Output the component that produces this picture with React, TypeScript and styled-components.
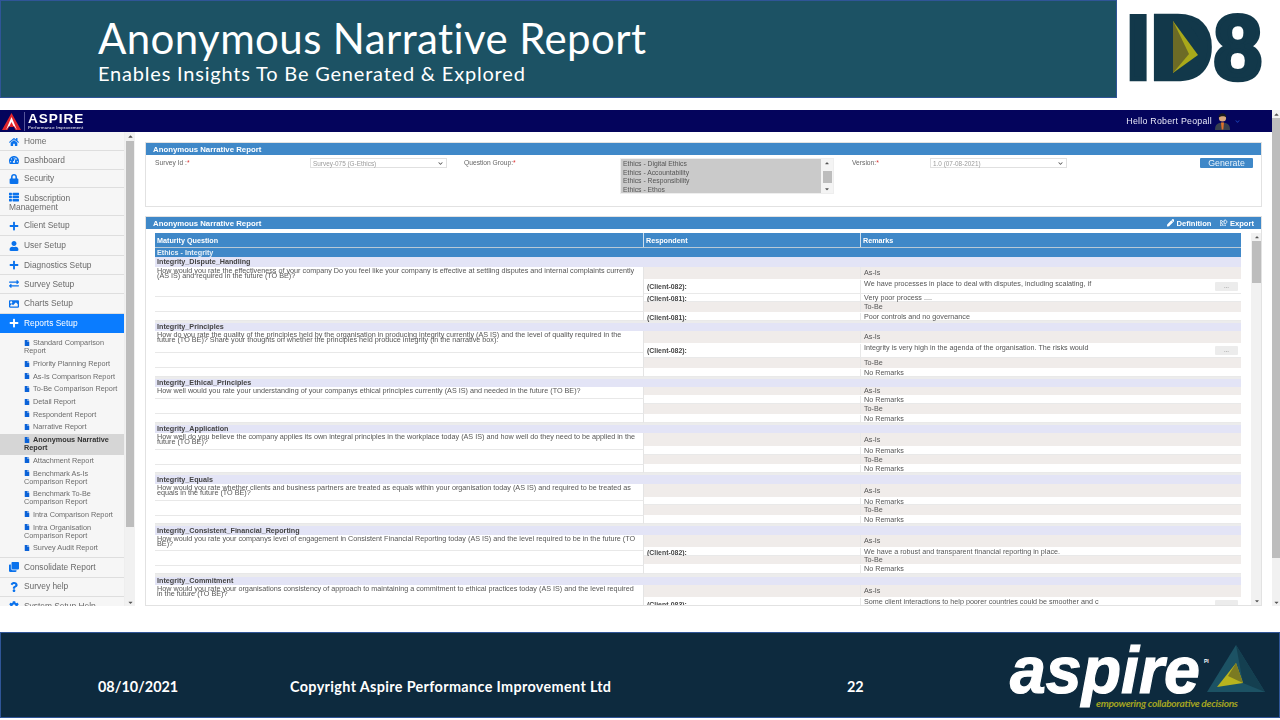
import React from "react";
import styled, { createGlobalStyle } from "styled-components";
import {
  FaHome, FaTachometerAlt, FaLock, FaThList, FaPlus, FaUser, FaExchangeAlt, FaImage,
  FaFile, FaQuestion, FaPen, FaRegShareSquare, FaClone, FaCog, FaChevronDown, FaCaretUp, FaCaretDown,
} from "react-icons/fa";

const Global = createGlobalStyle`
  html, body { margin: 0; padding: 0; background: #fff; overflow: hidden; }
  * { box-sizing: border-box; }
`;

const Slide = styled.div`
  width: 1280px; height: 720px; display: flex; flex-direction: column; background: #fff; overflow: hidden;
  font-family: "Liberation Sans", Arial, sans-serif;
`;
const TopRow = styled.header`display: flex; height: 98px; margin-bottom: 12px; flex: none;`;
const Banner = styled.div`
  width: 1117px; background: #1c5264; border: 1px solid #2f5597; padding: 14px 0 0 97px; color: #fff;
  font-family: Lato, "Open Sans", sans-serif; font-variant-ligatures: none;
`;
const Title = styled.h1`margin: 0; font-size: 42px; line-height: 46px; font-weight: 400; letter-spacing: .4px;`;
const Subtitle = styled.p`margin: 0; font-size: 20px; line-height: 24px; letter-spacing: .8px;`;
const LogoBox = styled.div`flex: 1; padding: 12px 0 0 12px;`;

const Frame = styled.main`display: flex; height: 496px; flex: none; filter: blur(.35px); overflow: hidden;`;
const AppCol = styled.div`flex: 1; min-width: 0; display: flex; flex-direction: column;`;
const NavBar = styled.div`
  height: 22px; flex: none; background: #04045c; display: flex; align-items: center; color: #fff;
`;
const NavBrand = styled.div`display: flex; align-items: center; padding-left: 2px; flex: 1;`;
const BrandDivider = styled.span`width: 1px; height: 19px; background: #55559a; margin: 0 3px;`;
const BrandText = styled.div`display: flex; flex-direction: column; line-height: 1;`;
const BrandName = styled.span`font-size: 13.6px; line-height: 12px; font-weight: 700; letter-spacing: .95px;`;
const BrandSub = styled.span`font-size: 4.2px; line-height: 5px; letter-spacing: .25px;`;
const Hello = styled.span`font-size: 8.8px; letter-spacing: .25px; margin-right: 3px; color: #e8e8f8;`;
const Chevron = styled.span`display: flex; margin: 0 32px 0 5px; color: #1b3fb0; font-size: 5px;`;

const Body = styled.div`flex: 1; min-height: 0; display: flex;`;
const Sidebar = styled.nav`
  width: 125px; flex: none; background: #f6f6f6; overflow: hidden; padding-top: 1px; border-right: 1px solid #eee;
`;
const MenuItem = styled.div<{ $h: number; $active?: boolean; $pad?: boolean }>`
  height: ${(p) => p.$h}px; flex: none; padding: ${(p) => (p.$pad ? "4px 30px 0 9px" : "0 0 0 9px")};
  font-size: 8.4px; line-height: 9px; display: ${(p) => (p.$pad ? "block" : "flex")}; align-items: center;
  color: ${(p) => (p.$active ? "#fff" : "#6a6a6a")};
  background: ${(p) => (p.$active ? "#0a7cff" : "transparent")};
  border-bottom: 1.5px solid ${(p) => (p.$active ? "#0a7cff" : "#dedede")};
  svg { color: ${(p) => (p.$active ? "#fff" : "#0a72ec")}; font-size: 10px; margin-right: 5px; flex: none; vertical-align: -1px; }
`;
const SubList = styled.div`padding: 4px 0 2px; border-bottom: 1.5px solid #dedede;`;
const SubItem = styled.div<{ $active?: boolean }>`
  padding: 2.35px 0 2.35px 24px; font-size: 7.3px; line-height: 8px;
  color: ${(p) => (p.$active ? "#333" : "#6c6c6c")};
  font-weight: ${(p) => (p.$active ? 700 : 400)};
  background: ${(p) => (p.$active ? "#d6d6d6" : "transparent")};
  svg { color: #0a62d8; font-size: 6px; margin-right: 3px; vertical-align: -.5px; }
`;
const Scroll = styled.div<{ $w: number }>`
  width: ${(p) => p.$w}px; flex: none; background: #f1f1f1; display: flex; flex-direction: column; align-items: center;
  color: #555; font-size: 7px;
`;
const Thumb = styled.div<{ $top: number; $h: number; $inset?: number }>`
  width: calc(100% - ${(p) => (p.$inset ?? 1) * 2}px); height: ${(p) => p.$h}px; margin-top: ${(p) => p.$top}px;
  background: #bdbdbd; flex: none;
`;
const Arrow = styled.span<{ $end?: boolean }>`display: flex; height: 8px; align-items: center; flex: none; margin-top: ${(p) => (p.$end ? "auto" : "0")}; svg { display: block; }`;

const Content = styled.div`flex: 1; min-width: 0; padding: 10px 10px 0; display: flex; flex-direction: column; gap: 9px; overflow: hidden;`;
const Panel = styled.section<{ $h?: number }>`
  border: 1px solid #e2e2e2; background: #fff; flex: ${(p) => (p.$h ? `0 0 ${p.$h}px` : "1 1 0")}; min-height: 0;
  display: flex; flex-direction: column; overflow: hidden;
`;
const PanelHead = styled.div`
  height: 12px; flex: none; background: #3f88c8; color: #fff; font-weight: 700; font-size: 7.8px; display: flex; align-items: center;
  padding: 0 0 0 7px; justify-content: space-between;
`;
const HeadActions = styled.div`display: flex; gap: 9px; padding-right: 7px; font-size: 7.6px; svg { font-size: 7.5px; margin-right: 2px; vertical-align: -1px; }`;
const Form = styled.div`
  display: grid; grid-template-columns: 155px 154px 156px 232px 78px 270px 53px; padding: 3px 0 0 9px;
`;
const Label = styled.label`font-size: 6.7px; line-height: 10px; color: #666; span { color: #d33; }`;
const Select = styled.div`
  width: 137px; height: 10px; border: 1px solid #e0e0e0; font-size: 6.4px; color: #9a9a9a; display: flex; align-items: center;
  justify-content: space-between; padding: 0 3px 0 2px; svg { font-size: 5px; color: #555; }
`;
const ListBox = styled.div`width: 214px; height: 36px; border: 1px solid #eee; display: flex;`;
const ListOptions = styled.div`flex: 1; background: #cacaca; font-size: 6.8px; line-height: 8.5px; color: #555; padding: 1px 0 0 2px;`;
const ListScroll = styled.div`width: 12px; background: #f4f4f4; display: flex; flex-direction: column; align-items: center; color: #555; font-size: 6px;`;
const Button = styled.button`
  width: 53px; height: 10px; padding: 0; border: 0; border-radius: 1px; background: #3f88c8; color: #eaf3fb; font: 8.8px "Liberation Sans", Arial, sans-serif; line-height: 10px;
`;

const TableWrap = styled.div`flex: 1; min-height: 0; display: flex; padding: 4px 0 0 9px; gap: 10px; overflow: hidden;`;
const TableCol = styled.div`width: 1086px; flex: none;`;
const HeadRow = styled.div`
  display: grid; grid-template-columns: 489px 217px 380px; height: 15px; background: #3f88c8; border-bottom: 1px solid #b9c9d6;
`;
const HeadCell = styled.div`
  font-size: 7.2px; font-weight: 700; color: #fff; display: flex; align-items: center; padding-left: 2px; border-right: 1px solid #cfe0ee;
  &:last-child { border-right: 0; }
`;
const Section = styled.div`
  height: 9px; background: #3f88c8; color: #e8f1f9; font-size: 7.2px; font-weight: 700; display: flex; align-items: center; padding-left: 2px;
`;
const GroupTitle = styled.div<{ $h: number }>`
  height: ${(p) => p.$h}px; background: #e3e4f6; color: #444; font-size: 7.2px; font-weight: 700; display: flex; align-items: center; padding: 0 0 1px 2px;
`;
const GroupBody = styled.div<{ $gap: number }>`
  display: grid; grid-template-columns: 489px 597px; padding-bottom: ${(p) => p.$gap}px; background: #ececec;
`;
const LeftCol = styled.div`display: flex; flex-direction: column; background: #fff;`;
const LeftCell = styled.div<{ $h: number }>`
  height: ${(p) => p.$h}px; flex: none; border-bottom: 1px solid #e8e8e8; border-right: 1px solid #e4e4e4;
  padding: 2px 3px 0 2px; font-size: 7.22px; line-height: 4.8px; color: #555;
`;
const RightCol = styled.div`display: flex; flex-direction: column;`;
const Row = styled.div<{ $h: number; $grey?: boolean }>`
  height: ${(p) => p.$h}px; flex: none; display: grid; grid-template-columns: 217px 380px;
  background: ${(p) => (p.$grey ? "#f0ecea" : "#fff")};
  border-bottom: 1px solid ${(p) => (p.$grey ? "#fff" : "#e9e9e9")};
`;
const Respondent = styled.div`
  font-size: 6.9px; font-weight: 700; color: #444; display: flex; align-items: center; padding-left: 3px; border-right: 1px solid #e8e8e8;
`;
const Remark = styled.div<{ $top?: boolean }>`
  position: relative; font-size: 7.2px; line-height: 8px; color: #555; padding-left: 3px;
  display: flex; align-items: ${(p) => (p.$top ? "flex-start" : "center")};
`;
const More = styled.span`
  position: absolute; right: 3px; top: 2px; width: 23px; height: 9px; background: #ececec; border-radius: 1px; color: #555;
  font-size: 6px; line-height: 9px; text-align: center;
`;
const TableScroll = styled.div`width: 11px; flex: none; background: #f1f1f1; display: flex; flex-direction: column; align-items: center; color: #555; font-size: 6px;`;

const Footer = styled.footer`
  height: 86px; margin-top: 26px; flex: none; background: #0d2a3e; border: 1px solid #2f5597; position: relative;
  display: grid; grid-template-columns: 192px 557px 60px 1fr; padding-left: 97px; color: #fff;
  font: 700 14.4px/17px Lato, "Open Sans", sans-serif;
`;
const FootText = styled.span`align-self: end; padding-bottom: 23px;`;
const Copyright = styled(FootText)`letter-spacing: .35px;`;
const FootLogo = styled.div`justify-self: end; align-self: start; padding: 8px 7px 0 0;`;

type RowData = { h: number; grey?: boolean; who?: string; text: string; more?: boolean; top?: boolean };
type Group = { title: string; th: number; q: string; left: number[]; gap: number; rows: RowData[] };

const groups: Group[] = [
  { title: "Integrity_Dispute_Handling", th: 10, gap: 2,
    q: "How would you rate the effectiveness of your company Do you feel like your company is effective at settling disputes and internal complaints currently (AS IS) and required in the future (TO BE)?",
    left: [30, 15, 9],
    rows: [
      { h: 13, grey: true, text: "As-Is" },
      { h: 14, who: "(Client-082):", text: "We have processes in place to deal with disputes, including scalating, if", more: true, top: true },
      { h: 8, who: "(Client-081):", text: "Very poor process ...." },
      { h: 11, grey: true, text: "To-Be" },
      { h: 8, who: "(Client-081):", text: "Poor controls and no governance" },
    ] },
  { title: "Integrity_Principles", th: 8, gap: 2,
    q: "How do you rate the quality of the principles held by the organisation in producing integrity currently (AS IS) and the level of quality required in the future (TO BE)? Share your thoughts on whether the principles held produce integrity (in the narrative box).",
    left: [22, 15, 9],
    rows: [
      { h: 13, grey: true, text: "As-Is" },
      { h: 14, who: "(Client-082):", text: "Integrity is very high in the agenda of the organisation. The risks would", more: true, top: true },
      { h: 11, grey: true, text: "To-Be" },
      { h: 8, text: "No Remarks" },
    ] },
  { title: "Integrity_Ethical_Principles", th: 8, gap: 2,
    q: "How well would you rate your understanding of your companys ethical principles currently (AS IS) and needed in the future (TO BE)?",
    left: [12, 15, 9],
    rows: [
      { h: 9, grey: true, text: "As-Is" },
      { h: 8, text: "No Remarks" },
      { h: 11, grey: true, text: "To-Be" },
      { h: 8, text: "No Remarks" },
    ] },
  { title: "Integrity_Application", th: 8, gap: 2,
    q: "How well do you believe the company applies its own integral principles in the workplace today (AS IS) and how well do they need to be applied in the future (TO BE)?",
    left: [17, 15, 8],
    rows: [
      { h: 14, grey: true, text: "As-Is" },
      { h: 8, text: "No Remarks" },
      { h: 10, grey: true, text: "To-Be" },
      { h: 8, text: "No Remarks" },
    ] },
  { title: "Integrity_Equals", th: 9, gap: 2,
    q: "How would you rate whether clients and business partners are treated as equals within your organisation today (AS IS) and required to be treated as equals in the future (TO BE)?",
    left: [17, 15, 8],
    rows: [
      { h: 14, grey: true, text: "As-Is" },
      { h: 7, text: "No Remarks" },
      { h: 11, grey: true, text: "To-Be" },
      { h: 8, text: "No Remarks" },
    ] },
  { title: "Integrity_Consistent_Financial_Reporting", th: 9, gap: 3,
    q: "How would you rate your companys level of engagement in Consistent Financial Reporting today (AS IS) and the level required to be in the future (TO BE)?",
    left: [16, 15, 8],
    rows: [
      { h: 13, grey: true, text: "As-Is" },
      { h: 8, who: "(Client-082):", text: "We have a robust and transparent financial reporting in place." },
      { h: 9, grey: true, text: "To-Be" },
      { h: 9, text: "No Remarks" },
    ] },
  { title: "Integrity_Commitment", th: 8, gap: 0,
    q: "How would you rate your organisations consistency of approach to maintaining a commitment to ethical practices today (AS IS) and the level required in the future (TO BE)?",
    left: [30],
    rows: [
      { h: 13, grey: true, text: "As-Is" },
      { h: 14, who: "(Client-083):", text: "Some client interactions to help poorer countries could be smoother and c", more: true, top: true },
    ] },
];

const menuTop: { label: string; icon: React.ReactNode; h: number; pad?: boolean; active?: boolean }[] = [
  { label: "Home", icon: <FaHome />, h: 18 },
  { label: "Dashboard", icon: <FaTachometerAlt />, h: 19 },
  { label: "Security", icon: <FaLock />, h: 18 },
  { label: "Subscription Management", icon: <FaThList />, h: 28, pad: true },
  { label: "Client Setup", icon: <FaPlus />, h: 20 },
  { label: "User Setup", icon: <FaUser />, h: 20 },
  { label: "Diagnostics Setup", icon: <FaPlus />, h: 19 },
  { label: "Survey Setup", icon: <FaExchangeAlt />, h: 19 },
  { label: "Charts Setup", icon: <FaImage />, h: 20 },
  { label: "Reports Setup", icon: <FaPlus />, h: 19, active: true },
];
const subItems = [
  "Standard Comparison Report", "Priority Planning Report", "As-Is Comparison Report", "To-Be Comparison Report",
  "Detail Report", "Respondent Report", "Narrative Report", "Anonymous Narrative Report", "Attachment Report",
  "Benchmark As-Is Comparison Report", "Benchmark To-Be Comparison Report", "Intra Comparison Report",
  "Intra Organisation Comparison Report", "Survey Audit Report",
];

const Id8Logo = () => (
  <svg width="140" height="74" viewBox="0 0 140 74" role="img" aria-label="ID8">
    <text x="-3" y="67" fontFamily="Liberation Sans, Arial, sans-serif" fontWeight="700" fontSize="90" fill="#12384a" stroke="#12384a" strokeWidth="4.5" textLength="136" lengthAdjust="spacingAndGlyphs">ID8</text>
    <path d="M32 12 H60 L71 28 V50 L60 65 H32 Z" fill="#12384a" />
    <path d="M44 9 L69 43 L44 61 Z" fill="#a9a91a" />
    <path d="M44 9 L60 42 L44 61 Z" fill="#6c6b26" />
  </svg>
);

const AspireLogo = () => (
  <svg width="268" height="74" viewBox="0 0 268 74" role="img" aria-label="aspire">
    <text x="6" y="52" fontFamily="Liberation Sans, Arial, sans-serif" fontStyle="italic" fontWeight="700" fontSize="66" fill="#fff" stroke="#fff" strokeWidth="1.2" textLength="190" lengthAdjust="spacingAndGlyphs">aspire</text>
    <text x="200" y="22" fontFamily="Liberation Sans, Arial, sans-serif" fontWeight="700" fontSize="5" fill="#fff">PI</text>
    <text x="92" y="66" fontFamily="Lato, sans-serif" fontStyle="italic" fontWeight="700" fontSize="10.2" fill="#a3a322" textLength="142">empowering collaborative decisions</text>
    <path d="M232 4 L261 51 L203 51 Z" fill="#1c5264" />
    <path d="M232 4 L261 51 L239 42 Z" fill="#143f50" />
    <path d="M232 22 L239 42 L213 46 Z" fill="#b9b41e" />
    <path d="M232 22 L239 42 L224 35 Z" fill="#7b7a22" />
  </svg>
);

const BrandMark = () => (
  <svg width="19" height="17" viewBox="0 0 19 17" aria-hidden="true">
    <path d="M9.5 0 L19 17 L13.5 17 L9.5 9 L5.5 17 L0 17 Z" fill="#e0252c" />
    <path d="M9.5 4 L15 17 L12 13 L7 13 L4 17 Z" fill="#fff" />
    <path d="M9.5 9 L12 14 L7 14 Z" fill="#e0252c" />
  </svg>
);

const Avatar = () => (
  <svg width="15" height="18" viewBox="0 0 15 18" aria-hidden="true">
    <path d="M0 18 C0 12 3 11 7.5 10.5 C12 11 15 12 15 18 Z" fill="#39414e" />
    <path d="M6 10.5 L9 10.5 L8.3 17.5 L6.7 17.5 Z" fill="#e0702a" />
    <circle cx="7.5" cy="6" r="3.6" fill="#d9a67e" />
    <path d="M3.8 5.5 C3.6 2 6 1.2 7.5 1.2 C9.5 1.2 11.4 2.4 11.2 5.5 C10 3.8 6 3.8 3.8 5.5 Z" fill="#1a1a1a" />
  </svg>
);

export default function App() {
  return (
    <Slide>
      <Global />
      <TopRow>
        <Banner>
          <Title>Anonymous Narrative Report</Title>
          <Subtitle>Enables Insights To Be Generated &amp; Explored</Subtitle>
        </Banner>
        <LogoBox><Id8Logo /></LogoBox>
      </TopRow>

      <Frame>
        <AppCol>
          <NavBar>
            <NavBrand>
              <BrandMark />
              <BrandDivider />
              <BrandText>
                <BrandName>ASPIRE</BrandName>
                <BrandSub>Performance Improvement</BrandSub>
              </BrandText>
            </NavBrand>
            <Hello>Hello Robert Peopall</Hello>
            <Avatar />
            <Chevron><FaChevronDown /></Chevron>
          </NavBar>
          <Body>
            <Sidebar>
              {menuTop.map((m) => (
                <MenuItem key={m.label} $h={m.h} $pad={m.pad} $active={m.active}>
                  {m.icon}
                  {m.pad ? m.label : <span>{m.label}</span>}
                </MenuItem>
              ))}
              <SubList>
                {subItems.map((s) => (
                  <SubItem key={s} $active={s === "Anonymous Narrative Report"}>
                    <FaFile />{s}
                  </SubItem>
                ))}
              </SubList>
              <MenuItem $h={20}><FaClone />Consolidate Report</MenuItem>
              <MenuItem $h={19}><FaQuestion />Survey help</MenuItem>
              <MenuItem $h={20}><FaCog />System Setup Help</MenuItem>
            </Sidebar>
            <Scroll $w={10}>
              <Arrow><FaCaretUp /></Arrow>
              <Thumb $top={1} $h={386} />
              <Arrow $end><FaCaretDown /></Arrow>
            </Scroll>
            <Content>
              <Panel $h={65}>
                <PanelHead>Anonymous Narrative Report</PanelHead>
                <Form>
                  <Label>Survey Id :<span>*</span></Label>
                  <div><Select>Survey-075 (G-Ethics)<FaChevronDown /></Select></div>
                  <Label>Question Group:<span>*</span></Label>
                  <ListBox>
                    <ListOptions>
                      <div>Ethics - Digital Ethics</div>
                      <div>Ethics - Accountability</div>
                      <div>Ethics - Responsibility</div>
                      <div>Ethics - Ethos</div>
                    </ListOptions>
                    <ListScroll>
                      <Arrow><FaCaretUp /></Arrow>
                      <Thumb $top={4} $h={12} $inset={1.5} />
                      <Arrow $end><FaCaretDown /></Arrow>
                    </ListScroll>
                  </ListBox>
                  <Label>Version:<span>*</span></Label>
                  <div><Select>1.0 (07-08-2021)<FaChevronDown /></Select></div>
                  <Button>Generate</Button>
                </Form>
              </Panel>
              <Panel>
                <PanelHead>
                  Anonymous Narrative Report
                  <HeadActions>
                    <span><FaPen />Definition</span>
                    <span><FaRegShareSquare />Export</span>
                  </HeadActions>
                </PanelHead>
                <TableWrap>
                  <TableCol>
                    <HeadRow>
                      <HeadCell>Maturity Question</HeadCell>
                      <HeadCell>Respondent</HeadCell>
                      <HeadCell>Remarks</HeadCell>
                    </HeadRow>
                    <Section>Ethics - Integrity</Section>
                    {groups.map((g) => (
                      <div key={g.title}>
                        <GroupTitle $h={g.th}>{g.title}</GroupTitle>
                        <GroupBody $gap={g.gap}>
                          <LeftCol>
                            {g.left.map((h, i) => (
                              <LeftCell key={i} $h={h}>{i === 0 ? g.q : null}</LeftCell>
                            ))}
                          </LeftCol>
                          <RightCol>
                            {g.rows.map((r, i) => (
                              <Row key={i} $h={r.h} $grey={r.grey}>
                                <Respondent>{r.who}</Respondent>
                                <Remark $top={r.top}>
                                  {r.text}
                                  {r.more ? <More>...</More> : null}
                                </Remark>
                              </Row>
                            ))}
                          </RightCol>
                        </GroupBody>
                      </div>
                    ))}
                  </TableCol>
                  <TableScroll>
                    <Arrow><FaCaretUp /></Arrow>
                    <Thumb $top={0} $h={42} $inset={1} />
                    <Arrow $end><FaCaretDown /></Arrow>
                  </TableScroll>
                </TableWrap>
              </Panel>
            </Content>
          </Body>
        </AppCol>
        <Scroll $w={8}>
          <Arrow><FaCaretUp /></Arrow>
          <Thumb $top={0} $h={440} $inset={0} />
          <Arrow $end><FaCaretDown /></Arrow>
        </Scroll>
      </Frame>

      <Footer>
        <FootText>08/10/2021</FootText>
        <Copyright>Copyright Aspire Performance Improvement Ltd</Copyright>
        <FootText>22</FootText>
        <FootLogo><AspireLogo /></FootLogo>
      </Footer>
    </Slide>
  );
}
